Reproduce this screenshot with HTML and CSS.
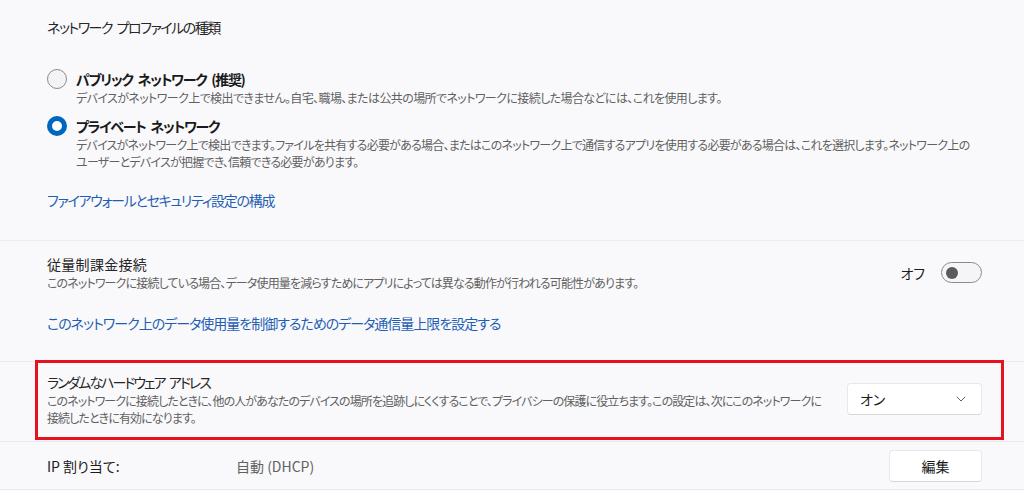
FILE: index.html
```html
<!DOCTYPE html>
<html lang="ja">
<head>
<meta charset="utf-8">
<link rel="stylesheet" href="styles.css">
</head>
<body>
<div class="page">
  <section class="section profile">
    <div class="section-title">ネットワーク プロファイルの種類</div>
    <div class="radio-list">
      <div class="radio-item">
        <span class="radio"></span>
        <div class="radio-text">
          <div class="radio-label">パブリック ネットワーク (推奨)</div>
          <div class="desc">デバイスがネットワーク上で検出できません。自宅、職場、または公共の場所でネットワークに接続した場合などには、これを使用します。</div>
        </div>
      </div>
      <div class="radio-item">
        <span class="radio checked"></span>
        <div class="radio-text">
          <div class="radio-label">プライベート ネットワーク</div>
          <div class="desc desc-private"><span class="nowrap">デバイスがネットワーク上で検出できます。ファイルを共有する必要がある場合、またはこのネットワーク上で通信するアプリを使用する必要がある場合は、これを選択します。ネットワーク上の</span><br>ユーザーとデバイスが把握でき、信頼できる必要があります。</div>
        </div>
      </div>
    </div>
    <a class="link link-fw">ファイアウォールとセキュリティ設定の構成</a>
  </section>

  <section class="section metered">
    <div class="row">
      <div class="row-text">
        <div class="row-title">従量制課金接続</div>
        <div class="desc">このネットワークに接続している場合、データ使用量を減らすためにアプリによっては異なる動作が行われる可能性があります。</div>
      </div>
      <div class="toggle-wrap">
        <span class="toggle-label">オフ</span>
        <span class="toggle"><span class="knob"></span></span>
      </div>
    </div>
    <a class="link link-limit">このネットワーク上のデータ使用量を制御するためのデータ通信量上限を設定する</a>
  </section>

  <section class="section random">
    <div class="highlight">
      <div class="row">
        <div class="row-text">
          <div class="row-title">ランダムなハードウェア アドレス</div>
          <div class="desc desc-random"><span class="nowrap">このネットワークに接続したときに、他の人があなたのデバイスの場所を追跡しにくくすることで、プライバシーの保護に役立ちます。この設定は、次にこのネットワークに</span><br>接続したときに有効になります。</div>
        </div>
        <div class="dropdown">
          <span>オン</span>
          <svg class="chevron" width="10" height="6" viewBox="0 0 10 6"><path d="M1 1 L5 5 L9 1" fill="none" stroke="#5f5f5f" stroke-width="1" stroke-linecap="round" stroke-linejoin="round"/></svg>
        </div>
      </div>
    </div>
  </section>

  <section class="section ip">
    <div class="ip-row">
      <span class="ip-label">IP 割り当て:</span>
      <span class="ip-value">自動 (DHCP)</span>
      <span class="btn">編集</span>
    </div>
  </section>
</div>
</body>
</html>
```

FILE: styles.css
```css
* { box-sizing: border-box; }
html, body {
  margin: 0;
  padding: 0;
  background: #f9f9fb;
}
body {
  font-family: "Noto Sans CJK JP", "Noto Sans", sans-serif;
  font-feature-settings: "palt";
  color: #1b1b1b;
  font-size: 14px;
  letter-spacing: -1px;
  word-spacing: 3px;
  width: 1024px;
  height: 491px;
  overflow: hidden;
}
.page {
  display: flex;
  flex-direction: column;
}
.nowrap { white-space: nowrap; }
.section {
  border-bottom: 1px solid #ececf0;
}
.profile {
  padding: 17px 42px 30px 47px;
  height: 241px;
}
.section-title {
  line-height: 20px;
  font-size: 14px;
  letter-spacing: -1.5px;
  color: #262626;
}
.radio-list {
  margin-top: 32px;
  display: flex;
  flex-direction: column;
  gap: 10px;
}
.radio-item {
  display: flex;
  align-items: flex-start;
  gap: 9px;
}
.radio {
  width: 20px;
  height: 20px;
  border-radius: 50%;
  border: 1px solid #8a8a8a;
  background: #f3f3f5;
  flex: none;
}
.radio.checked {
  border: 5px solid #0067c0;
  background: #ffffff;
}
.radio-label {
  font-weight: 600;
  line-height: 20px;
  font-size: 14px;
  letter-spacing: -1.3px;
  color: #1a1a1a;
}
.desc {
  font-size: 12px;
  line-height: 17px;
  color: #616161;
  letter-spacing: -0.6px;
  word-spacing: 0;
}
.desc-private { letter-spacing: -0.75px; }
.desc-random { letter-spacing: -0.9px; }
.link {
  display: block;
  color: #1f5eb3;
  line-height: 20px;
  font-size: 14px;
  letter-spacing: -1.3px;
}
.link-fw { margin-top: 20px; }
.metered {
  padding: 13px 42px 0 47px;
  height: 121px;
}
.row {
  display: flex;
  align-items: center;
  justify-content: space-between;
}
.row-title {
  line-height: 20px;
  font-size: 14px;
  letter-spacing: -1px;
  color: #262626;
}
.metered .row-title { letter-spacing: 0.3px; }
.random .row-title { letter-spacing: -2px; }
.metered .desc { letter-spacing: -0.85px; }
.link-limit { margin-top: 22px; letter-spacing: -1px; }
.toggle-wrap {
  display: flex;
  align-items: center;
  gap: 16px;
}
.toggle-label { font-size: 14px; line-height: 20px; letter-spacing: 0; }
.toggle {
  width: 41px;
  height: 21px;
  border: 1px solid #8a8a8a;
  border-radius: 11px;
  background: #f5f5f7;
  display: flex;
  align-items: center;
  padding-left: 4px;
}
.knob {
  width: 12px;
  height: 12px;
  border-radius: 50%;
  background: #5a5a5a;
}
.random {
  height: 80px;
  padding: 0 20px 0 35px;
}
.highlight {
  border: 3px solid #e5131f;
  height: 80px;
  margin-top: -2px;
  padding: 9px 19px 0 9px;
}
.dropdown {
  width: 135px;
  height: 32px;
  background: #ffffff;
  border: 1px solid #e8e8ea;
  border-bottom-color: #d6d6d8;
  border-radius: 4px;
  display: flex;
  align-items: center;
  justify-content: space-between;
  padding: 0 15px 0 12px;
  font-size: 14px;
  letter-spacing: 0;
  flex: none;
}
.ip {
  height: 48px;
  padding: 0 42px 0 47px;
  letter-spacing: 0;
  word-spacing: 0;
}
.ip-row {
  display: flex;
  align-items: center;
  height: 100%;
}
.ip-label {
  width: 189px;
  font-size: 14px;
}
.ip-value {
  color: #616161;
  font-size: 14px;
  flex: 1;
}
.btn {
  width: 93px;
  height: 32px;
  background: #ffffff;
  border: 1px solid #e8e8ea;
  border-bottom-color: #d6d6d8;
  border-radius: 4px;
  display: flex;
  align-items: center;
  justify-content: center;
  font-size: 14px;
}
```
